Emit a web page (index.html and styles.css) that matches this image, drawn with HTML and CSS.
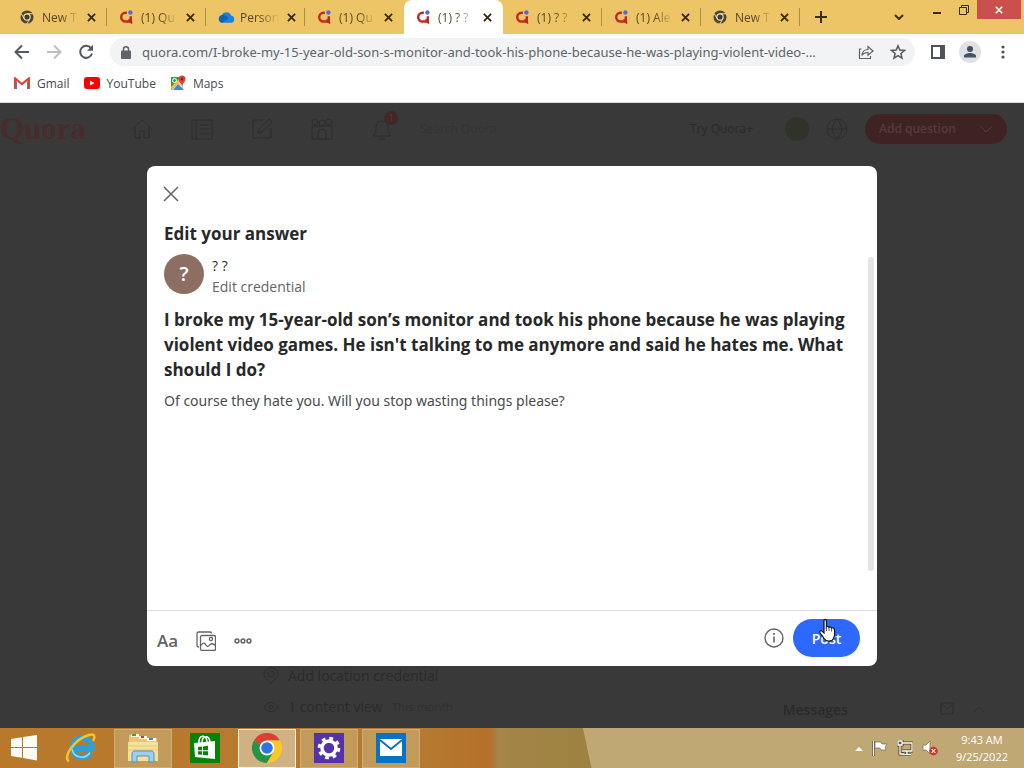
FILE: index.html
```html
<!DOCTYPE html>
<html lang="en">
<head>
  <meta charset="UTF-8">
  <meta name="viewport" content="width=device-width, initial-scale=1.0">
  <title>(1) ? ? - Quora</title>
  <link rel="stylesheet" href="styles.css">
</head>
<body>
  <!-- shared icons -->
  <svg class="sprite" aria-hidden="true">
    <symbol id="i-x" viewBox="0 0 10 10"><path d="M1 1l8 8M9 1L1 9" stroke="currentColor" stroke-width="2" fill="none"/></symbol>
    <symbol id="i-chrome-dark" viewBox="0 0 16 16">
      <circle cx="8" cy="8" r="7.500" fill="#4d4630"/>
      <circle cx="8" cy="8" r="4.200" fill="#f0dfae"/>
      <circle cx="8" cy="8" r="2.900" fill="#3d3a2c"/>
      <path d="M8 4.300h7M4.800 10L1.300 4M11.200 10l-3.500 6" stroke="#f0dfae" stroke-width="1.100"/>
    </symbol>
    <symbol id="i-quora" viewBox="0 0 16 16">
      <path d="M9 3.200H7.500a5 5 0 0 0 0 10H13.500V7" fill="none" stroke="#c22a20" stroke-width="2.800"/>
      <path d="M11 10.500l3.800 5" stroke="#b8281f" stroke-width="2"/>
      <circle cx="13" cy="2.800" r="2.500" fill="#4f6fd8"/>
    </symbol>
    <symbol id="i-cloud" viewBox="0 0 18 12"><path d="M4.500 12a4 4 0 0 1-.6-7.900A5.500 5.500 0 0 1 14 4.500 3.800 3.800 0 0 1 14 12z" fill="#1683d8"/><path d="M4 4.200c3-.8 5 1 7 3.300L4.500 12a4 4 0 0 1-.5-7.800z" fill="#0c64b8"/></symbol>
  </svg>

  <header class="browser">
    <div class="tab-strip">
      <div class="tab"><svg class="favicon"><use href="#i-chrome-dark"/></svg><button class="tab-title">New T</button><button class="tab-close" aria-label="Close tab"><svg><use href="#i-x"/></svg></button></div>
      <div class="tab"><svg class="favicon"><use href="#i-quora"/></svg><button class="tab-title">(1) Qu</button><button class="tab-close" aria-label="Close tab"><svg><use href="#i-x"/></svg></button></div>
      <div class="tab"><svg class="favicon wide"><use href="#i-cloud"/></svg><button class="tab-title">Person</button><button class="tab-close" aria-label="Close tab"><svg><use href="#i-x"/></svg></button></div>
      <div class="tab no-line"><svg class="favicon"><use href="#i-quora"/></svg><button class="tab-title">(1) Qu</button><button class="tab-close" aria-label="Close tab"><svg><use href="#i-x"/></svg></button></div>
      <div class="tab active"><svg class="favicon"><use href="#i-quora"/></svg><button class="tab-title">(1) ? ?</button><button class="tab-close" aria-label="Close tab"><svg><use href="#i-x"/></svg></button></div>
      <div class="tab"><svg class="favicon"><use href="#i-quora"/></svg><button class="tab-title">(1) ? ?</button><button class="tab-close" aria-label="Close tab"><svg><use href="#i-x"/></svg></button></div>
      <div class="tab"><svg class="favicon"><use href="#i-quora"/></svg><button class="tab-title">(1) Ale</button><button class="tab-close" aria-label="Close tab"><svg><use href="#i-x"/></svg></button></div>
      <div class="tab"><svg class="favicon"><use href="#i-chrome-dark"/></svg><button class="tab-title">New T</button><button class="tab-close" aria-label="Close tab"><svg><use href="#i-x"/></svg></button></div>
      <button class="new-tab" aria-label="New tab"><svg width="12" height="12" viewBox="0 0 12 12"><path d="M6 0v12M0 6h12" stroke="#3a3115" stroke-width="2"/></svg></button>
      <div class="window-controls">
        <button class="tab-search" aria-label="Search tabs"><svg width="10" height="6" viewBox="0 0 10 6"><path d="M1 1l4 4 4-4" fill="none" stroke="#3a3115" stroke-width="2"/></svg></button>
        <button class="win-btn" aria-label="Minimize"><svg width="8" height="10" viewBox="0 0 8 10"><path d="M0 8h8" stroke="#33290d" stroke-width="2"/></svg></button>
        <button class="win-btn" aria-label="Restore"><svg width="10" height="10" viewBox="0 0 10 10"><path d="M.5 2.500h7v7h-7zM2.500 2.500v-2h7v7h-2" fill="none" stroke="#33290d"/></svg></button>
        <button class="win-close" aria-label="Close"><svg width="8" height="8"><use href="#i-x"/></svg></button>
      </div>
    </div>

    <div class="toolbar">
      <div class="nav-buttons">
        <button aria-label="Back"><svg width="16" height="16" viewBox="0 0 16 16"><path d="M15 8H2M8 1.500L1.500 8 8 14.500" fill="none" stroke="#555a5e" stroke-width="2"/></svg></button>
        <button aria-label="Forward"><svg width="16" height="16" viewBox="0 0 16 16"><path d="M1 8h13M8 1.500L14.500 8 8 14.500" fill="none" stroke="#bcbec0" stroke-width="2"/></svg></button>
        <button aria-label="Reload"><svg width="16" height="16" viewBox="0 0 16 16"><path d="M13 4.200A6 6 0 1 0 14 9.500" fill="none" stroke="#555a5e" stroke-width="2"/><path d="M15 .8v6H9z" fill="#555a5e"/></svg></button>
      </div>
      <div class="omnibox">
        <svg width="10" height="13" viewBox="0 0 10 13"><rect y="4.500" width="10" height="8.500" rx="1" fill="#5f6368"/><path d="M2.500 5V3.300a2.500 2.500 0 0 1 5 0V5" fill="none" stroke="#5f6368" stroke-width="1.500"/></svg>
        <input class="url" type="text" aria-label="Address" value="quora.com/I-broke-my-15-year-old-son-s-monitor-and-took-his-phone-because-he-was-playing-violent-video-...">
        <button aria-label="Share"><svg width="16" height="16" viewBox="0 0 16 16"><path d="M3.500 5H1.500v9.500h11V12M4 11.500c.3-4 2.500-6 6-6V2.500L15 7l-5 4.200V8.500c-2.800 0-4.600.8-6 3z" fill="none" stroke="#5f6368" stroke-width="1.200"/></svg></button>
        <button aria-label="Bookmark"><svg width="16" height="16" viewBox="0 0 16 16"><path d="M8 1.800l1.800 4.300 4.700.4-3.600 3 1.100 4.600L8 11.700l-4 2.400 1.100-4.600-3.600-3 4.700-.4z" fill="none" stroke="#555a5e" stroke-width="1.500"/></svg></button>
      </div>
      <div class="toolbar-end">
        <button aria-label="Side panel"><svg width="14" height="14" viewBox="0 0 14 14"><path d="M1 1h12v12H1z" fill="none" stroke="#50545a" stroke-width="2"/><path d="M9 1h5v12H9z" fill="#50545a"/></svg></button>
        <button aria-label="Profile"><svg width="22" height="22" viewBox="0 0 22 22"><circle cx="11" cy="11" r="11" fill="#dfe1e5"/><circle cx="11" cy="8" r="3" fill="#46505f"/><path d="M5 16.500v-1.500c0-2 4-3 6-3s6 1 6 3v1.500z" fill="#46505f"/></svg></button>
        <button class="menu" aria-label="Menu"><svg width="4" height="14" viewBox="0 0 4 14"><g fill="#50545a"><circle cx="2" cy="2" r="1.600"/><circle cx="2" cy="7" r="1.600"/><circle cx="2" cy="12" r="1.600"/></g></svg></button>
      </div>
    </div>

    <nav class="bookmarks">
      <a href="#"><svg width="16" height="12" viewBox="0 0 16 12"><path d="M0 1.500V12h3V5z" fill="#4c7fd8"/><path d="M16 1.500V12h-3V5z" fill="#3f9c57"/><path d="M1.200 11.500V1.500L8 7l6.800-5.500v10" fill="none" stroke="#dc4437" stroke-width="2.200"/></svg>Gmail</a>
      <a href="#"><svg width="16" height="12" viewBox="0 0 16 12"><rect width="16" height="12" rx="3" fill="#f00"/><path d="M6 3.500v5L10.500 6z" fill="#fff"/></svg>YouTube</a>
      <a href="#"><svg width="16" height="16" viewBox="0 0 16 16"><path d="M1 2h12v13H1z" fill="#3d9d55"/><path d="M1 15L12 4l1 11z" fill="#dcdfe0"/><path d="M8 9l6 6H3z" fill="#4a82df"/><path d="M1 12l8-8 2 2L2 15z" fill="#f1c232"/><circle cx="4.500" cy="5.500" r="2" fill="none" stroke="#fff"/><path d="M12 11c-.5-3-3.500-4-3.500-7a3.500 3.500 0 0 1 7 0C15.500 7 12.500 8 12 11z" fill="#dc4032"/><circle cx="12" cy="4" r="1.200" fill="#7d1d17"/></svg>Maps</a>
    </nav>
  </header>

  <main class="viewport">
    <!-- page behind the dialog -->
    <div class="page">
      <div class="site-header">
        <a class="logo" href="#">Quora</a>
        <nav class="site-nav">
          <a href="#" aria-label="Home"><svg width="24" height="24" viewBox="0 0 24 24"><path d="M2 12L12 3l10 9M5 10v11h5v-7h4v7h5V10"/></svg></a>
          <a href="#" aria-label="Following"><svg width="24" height="24" viewBox="0 0 24 24"><path d="M2 3h20v19H2zM6 3v19M10 8h9M10 12h9M10 17h9"/></svg></a>
          <a href="#" aria-label="Answer"><svg width="24" height="24" viewBox="0 0 24 24"><path d="M13 3H3v18h18V11M8 16l1-4L19 2l3 3-10 10z"/></svg></a>
          <a href="#" aria-label="Spaces"><svg width="24" height="24" viewBox="0 0 24 24"><path d="M2 9h20v13H2zM8 22v-6a4 4 0 0 1 8 0v6"/><circle cx="5" cy="5" r="3"/><circle cx="12" cy="6" r="3"/><circle cx="19" cy="5" r="3"/></svg></a>
          <a class="bell" href="#" aria-label="Notifications"><svg width="24" height="24" viewBox="0 0 24 24"><path d="M3 19c2-2 3-4 3-9a6 6 0 0 1 12 0c0 5 1 7 3 9zM9 22h6"/></svg><span class="badge">1</span></a>
        </nav>
        <input class="site-search" type="text" aria-label="Search" placeholder="Search Quora">
        <a class="try" href="#">Try Quora+</a>
        <span class="mini-avatar"></span>
        <svg class="globe" width="24" height="24" viewBox="0 0 24 24"><circle cx="12" cy="12" r="10"/><path d="M2 12h20M12 2c-6 6-6 14 0 20M12 2c6 6 6 14 0 20"/></svg>
        <button class="add-question">Add question <svg width="14" height="8" viewBox="0 0 14 8"><path d="M1 1l6 6 6-6"/></svg></button>
      </div>
      <div class="page-bottom">
        <ul class="credentials">
          <li><svg width="16" height="18" viewBox="0 0 16 18"><path d="M8 17C4 12 1 10 1 7a7 6 0 0 1 14 0c0 3-3 5-7 10z"/><circle cx="8" cy="7" r="3"/></svg>Add location credential</li>
          <li><svg width="16" height="18" viewBox="0 0 16 18"><path d="M1 9c4-6 10-6 14 0-4 6-10 6-14 0z"/><circle cx="8" cy="9" r="2"/></svg>1 content view <small>This month</small></li>
        </ul>
        <div class="messages">Messages <svg width="46" height="16" viewBox="0 0 46 16"><path d="M1 2h12v11H1zM1 2l6 6 8-7M34 11l5-5 5 5"/></svg></div>
      </div>
    </div>

    <div class="overlay">
      <section class="modal" role="dialog" aria-labelledby="dialog-title">
        <button class="modal-close" aria-label="Close"><svg width="16" height="16" viewBox="0 0 16 16"><path d="M1 1l14 14M15 1L1 15" stroke="#636466" stroke-width="1.500"/></svg></button>
        <h1 id="dialog-title">Edit your answer</h1>
        <div class="modal-body">
          <div class="modal-content">
            <div class="author">
              <span class="avatar">?</span>
              <div>
                <p class="author-name">? ?</p>
                <a class="credential" href="#">Edit credential</a>
              </div>
            </div>
            <h2>I broke my 15-year-old son’s monitor and took his phone because he was playing violent video games. He isn't talking to me anymore and said he hates me. What should I do?</h2>
            <textarea class="answer" aria-label="Your answer">Of course they hate you. Will you stop wasting things please?</textarea>
          </div>
          <div class="scroll-thumb"></div>
        </div>
        <footer class="modal-footer">
          <div class="tools">
            <button class="format">Aa</button>
            <button aria-label="Add image"><svg width="20" height="20" viewBox="0 0 20 20"><g fill="none" stroke="#636466" stroke-width="1.300"><path d="M3 16c-1.200 0-2-.5-2-1.500v-12A1.500 1.500 0 0 1 2.500 1H14c1 0 1.700.6 1.700 1.500"/><rect x="4.500" y="4.500" width="15" height="15" rx="1.500"/><circle cx="15" cy="8" r="1.600"/><path d="M5 14.500c2-3 3.500-3 5-.5s2.500 1.500 4-.3 3-1.200 5.500.8"/></g></svg></button>
            <button aria-label="More"><svg width="18" height="6" viewBox="0 0 18 6"><g fill="none" stroke="#636466" stroke-width="1.500"><circle cx="3" cy="3" r="1.900"/><circle cx="9" cy="3" r="1.900"/><circle cx="15" cy="3" r="1.900"/></g></svg></button>
          </div>
          <button class="info" aria-label="Info"><svg width="20" height="20" viewBox="0 0 20 20"><circle cx="10" cy="10" r="9" fill="none" stroke="#636466" stroke-width="1.400"/><path d="M10 8.500v6M10 5v2" stroke="#636466" stroke-width="1.600"/></svg></button>
          <div class="post-wrap">
            <button class="post">Post</button>
            <svg class="cursor" width="18" height="24" viewBox="0 0 18 24"><path d="M5 1.500c0-1.300 2.400-1.300 2.400 0V8c.6-1 2.400-.8 2.600.4.700-.8 2.300-.5 2.500.7 1-.7 2.800-.2 2.800 1.300.8 3.800.5 6.600-.9 9.200-.9 3-7 3.400-9 .4C3.800 17.500 2.200 15.500.9 13.500c-.7-1.400.9-2.300 2-1.400L5 14z" fill="#fff" stroke="#111" stroke-width="1.200"/><path d="M7.500 8v4M10 8.500V12M12.500 9v3.500" stroke="#333" stroke-width=".8"/></svg>
          </div>
        </footer>
      </section>
    </div>
  </main>

  <footer class="taskbar">
    <button class="task" aria-label="Start"><svg width="28" height="28" viewBox="0 0 28 28"><path d="M1 5l11-1.800V13H1zM13 3l14-2v12H13zM1 14h11v9.800L1 22zM13 14h14v12.500L13 24z" fill="#fffdf3"/></svg></button>
    <button class="task" aria-label="Internet Explorer"><svg width="32" height="32" viewBox="0 0 32 32"><path d="M25.500 21A9.800 9.800 0 1 1 27 16.800H9" fill="none" stroke="#2f9fd8" stroke-width="5.600"/><path d="M25 20.500A9.800 9.800 0 0 1 7 17" fill="none" stroke="#9ddcf3" stroke-width="1.500"/><path d="M4 29.500C-3 25 10 7 24 3c7-2 6 3 4 6" fill="none" stroke="#f3c32c" stroke-width="2.500"/></svg></button>
    <button class="task open" aria-label="File Explorer"><svg width="32" height="32" viewBox="0 0 32 32"><path d="M2 3h9l2 3h17v22H2z" fill="#e8c970"/><path d="M4 2h8v3H4zM12 4h8v3h-8zM20 6h9v3h-9z" fill="#fff8e0"/><path d="M5 2h4v2H5z" fill="#4b9a3d"/><path d="M14 4h3v2h-3z" fill="#c33c2b"/><path d="M22 6h4v2h-4z" fill="#438ac4"/><path d="M1 10h30v19H1z" fill="#f6e196"/><path d="M1 14h30M1 18h30" stroke="#e7cb74"/><path d="M5 30v-8c0-2 1-3 3-3h16c2 0 3 1 3 3v8h-5v-6H10v6z" fill="#9fcff0" stroke="#4a92c5"/></svg></button>
    <button class="task" aria-label="Store"><svg width="30" height="30" viewBox="0 0 30 30"><path d="M0 0h30v30H0z" fill="#078407"/><path d="M4 10l21-2v18L5 24z" fill="#fff"/><path d="M9 11c-1-10 8-10 8-2M12 10c0-8 7-8 8-1" fill="none" stroke="#fff" stroke-width="1.500"/><path d="M8 14l4-.5v3.700H8zM13 13.400l5-.6v4.400h-5zM8 18.200h4v3.600L8 21.500zM13 18.200h5v4.300l-5-.6z" fill="#078407"/></svg></button>
    <button class="task open current" aria-label="Chrome"><svg width="30" height="30" viewBox="0 0 30 30"><path d="M15 15L2 7.500A15 15 0 0 1 28 7.500H15z" fill="#dd4033"/><path d="M15 15L2 7.500A15 15 0 0 0 15 30l6.500-11z" fill="#259447"/><path d="M15 7.500h13A15 15 0 0 1 15 30l6.500-11z" fill="#fbc926"/><circle cx="15" cy="15" r="7.500" fill="#fff"/><circle cx="15" cy="15" r="5.800" fill="#2f74e4"/></svg></button>
    <button class="task open" aria-label="Settings"><svg width="30" height="30" viewBox="0 0 30 30"><path d="M0 0h30v30H0z" fill="#5632a8"/><circle cx="15" cy="15" r="7" fill="none" stroke="#fff" stroke-width="3.500"/><circle cx="15" cy="15" r="9.800" fill="none" stroke="#fff" stroke-width="3" stroke-dasharray="3.800 3.900"/></svg></button>
    <button class="task open" aria-label="Mail"><svg width="30" height="30" viewBox="0 0 30 30"><path d="M0 0h30v30H0z" fill="#0872c4"/><path d="M4 6h22v17H4z" fill="#fff"/><path d="M4 7l11 9L26 7" fill="none" stroke="#0872c4" stroke-width="2"/></svg></button>
    <div class="tray">
      <svg width="8" height="5" viewBox="0 0 8 5"><path d="M0 5l4-4 4 4z" fill="#fff"/></svg>
      <svg width="16" height="16" viewBox="0 0 16 16"><path d="M1.500 1v15" stroke="#4c4029" stroke-width="3"/><path d="M1.500 1v15" stroke="#fff" stroke-width="1.500"/><path d="M3 2h6l1 2h5l-2 3 1 3H9L8 8H3z" fill="#fff" stroke="#6a5939" stroke-width=".6"/></svg>
      <svg width="16" height="16" viewBox="0 0 16 16"><path d="M5 3h10v8H5M6 14.500h8M10 11v3M1 1h4v4H1zM3 5v9h4" fill="none" stroke="#4c4029" stroke-width="3"/><path d="M5 3h10v8H5M6 14.500h8M10 11v3M1 1h4v4H1zM3 5v9h4" fill="none" stroke="#fff" stroke-width="1.300"/></svg>
      <svg width="16" height="16" viewBox="0 0 16 16"><path d="M1 5h3l4-4v13l-4-4H1z" fill="#fff" stroke="#6a5939" stroke-width=".6"/><circle cx="11.500" cy="11" r="4.300" fill="#d62e2e"/><path d="M9.700 9.200l3.600 3.600M13.300 9.200l-3.600 3.600" stroke="#fff" stroke-width="1.200"/></svg>
      <time class="clock">9:43 AM<br>9/25/2022</time>
    </div>
  </footer>
</body>
</html>
```
FILE: styles.css
```css
* {
  box-sizing: border-box;
}
body {
  margin: 0;
  min-height: 100vh;
  display: flex;
  flex-direction: column;
  font-family: "Open Sans", "Noto Sans", sans-serif;
  font-size: 14px;
  color: #282829;
  overflow-x: hidden;
}
button, input, textarea {
  font: inherit;
  color: inherit;
  border: none;
  background: none;
  padding: 0;
  outline: none;
}
button {
  cursor: pointer;
}
a {
  color: inherit;
  text-decoration: none;
}
h1, h2, p, ul {
  margin: 0;
  padding: 0;
}
svg {
  display: block;
  flex: none;
}
.sprite {
  position: absolute;
  width: 0;
  height: 0;
}

/* browser */
.tab-strip {
  display: flex;
  height: 34px;
  padding-left: 8px;
  background-color: #eec566;
  font-size: 12px;
}
.tab {
  flex: 0 1 99px;
  min-width: 0;
  display: flex;
  align-items: center;
  gap: 8px;
  padding: 0 11px 0 12px;
  background: linear-gradient(#a98d4c, #a98d4c) right center / 1px 18px no-repeat;
}
.tab.no-line, .tab.active {
  background: none;
}
.tab.active {
  background-color: #fff;
  border-radius: 8px 8px 0 0;
}
.favicon {
  width: 14px;
  height: 14px;
}
.favicon.wide {
  width: 17px;
  margin-right: -3px;
}
.tab-title {
  flex: 1;
  white-space: nowrap;
  text-align: left;
  color: #54482a;
  mask-image: linear-gradient(to right, #000 50%, transparent);
}
.tab-close svg {
  width: 9px;
  height: 9px;
  color: #33290d;
}
.new-tab {
  width: 42px;
  display: flex;
  align-items: center;
  justify-content: center;
}
.window-controls {
  display: flex;
  align-items: flex-start;
  margin-left: auto;
  padding-right: 3px;
}
.tab-search {
  width: 32px;
  height: 34px;
  margin-right: 8px;
}
.tab-search svg {
  margin: 0 auto;
}
.win-btn, .win-close {
  width: 27px;
  height: 19px;
  display: flex;
  align-items: center;
  justify-content: center;
}
.win-close {
  width: 44px;
  background-color: #c9504c;
  color: #fff;
}
.toolbar {
  display: flex;
  align-items: center;
  gap: 16px;
  height: 36px;
  padding: 0 19px 0 14px;
  background-color: #fff;
}
.nav-buttons {
  display: flex;
  gap: 16px;
}
.omnibox {
  flex: 1;
  min-width: 0;
  height: 28px;
  display: flex;
  align-items: center;
  gap: 16px;
  padding: 0 9px 0 11px;
  border-radius: 14px;
  background-color: #f1f3f4;
}
.url {
  flex: 1;
  min-width: 0;
  margin-left: -5px;
  font-family: "Noto Sans", sans-serif;
  font-size: 13px;
  color: #5f6368;
}
.toolbar-end {
  display: flex;
  align-items: center;
  gap: 14px;
}
.menu {
  margin-left: 6px;
}
.bookmarks {
  display: flex;
  align-items: center;
  gap: 14px;
  height: 33px;
  padding: 0 14px 6px;
  border-bottom: 1px solid #dcdcdc;
  background-color: #fff;
  font-size: 12px;
  color: #45494d;
}
.bookmarks a {
  display: flex;
  align-items: center;
  gap: 7px;
}

/* dimmed page */
.viewport {
  position: relative;
  flex: 1;
  display: flex;
  flex-direction: column;
}
.page {
  flex: 1;
  display: flex;
  flex-direction: column;
  justify-content: space-between;
  background-color: #393939;
  color: #2a2a2a;
}
.page svg {
  fill: none;
  stroke: #2d2d2d;
}
.site-header {
  display: flex;
  align-items: center;
  height: 51px;
  padding-right: 17px;
  font-size: 12px;
}
.logo {
  width: 130px;
  font: bold 31px "Liberation Serif", serif;
  color: #482b2b;
}
.site-nav {
  display: flex;
  gap: 36px;
}
.bell {
  position: relative;
}
.badge {
  position: absolute;
  top: -6px;
  right: -4px;
  width: 14px;
  height: 14px;
  border-radius: 50%;
  background-color: #432626;
  color: #573f3f;
  font-size: 9px;
  line-height: 14px;
  text-align: center;
}
.site-search {
  flex: 1;
  min-width: 0;
  margin-left: 26px;
}
.site-search::placeholder {
  color: #333;
}
.try {
  margin-right: 32px;
}
.mini-avatar {
  width: 24px;
  height: 24px;
  border-radius: 50%;
  background-color: #2f3328;
}
.globe {
  margin: 0 16px;
}
.add-question {
  display: flex;
  align-items: center;
  justify-content: space-between;
  width: 142px;
  height: 30px;
  padding: 0 14px;
  border-radius: 15px;
  background-color: #3f2323;
  color: #543c3c;
  font-weight: 600;
}
.add-question svg {
  stroke: #543c3c;
}
.page-bottom {
  display: flex;
  align-items: flex-end;
  justify-content: space-between;
  padding: 0 38px 6px 263px;
}
.credentials {
  list-style: none;
}
.credentials li {
  display: flex;
  align-items: center;
  gap: 9px;
  height: 31px;
}
.credentials small {
  color: #303030;
}
.messages {
  display: flex;
  align-items: center;
  gap: 92px;
  height: 26px;
  font-weight: 600;
}

/* dialog */
.overlay {
  position: absolute;
  inset: 0;
  display: flex;
  align-items: center;
  justify-content: center;
}
.modal {
  width: 730px;
  max-width: 100%;
  min-height: 500px;
  display: flex;
  flex-direction: column;
  border-radius: 8px;
  background-color: #fff;
}
.modal-close {
  align-self: flex-start;
  margin: 20px 16px 18px;
}
.modal h1 {
  padding: 0 17px;
  font-size: 17px;
  line-height: 28px;
}
.modal-body {
  flex: 1;
  display: flex;
  padding: 6px 3px 0 17px;
}
.modal-content {
  flex: 1;
  display: flex;
  flex-direction: column;
}
.author {
  display: flex;
  gap: 8px;
}
.author div {
  padding-top: 1px;
  line-height: 21px;
}
.avatar {
  width: 40px;
  height: 40px;
  border-radius: 50%;
  background-color: #8d6e63;
  color: #fff;
  font-size: 20px;
  font-weight: 600;
  line-height: 40px;
  text-align: center;
}
.credential {
  color: #636466;
}
.modal h2 {
  margin-top: 10px;
  padding-right: 8px;
  font-size: 17px;
  line-height: 25px;
}
.answer {
  flex: 1;
  width: 100%;
  margin-top: 8px;
  resize: none;
  font-family: "Noto Sans", sans-serif;
  line-height: 21px;
  color: #4a4b4d;
}
.scroll-thumb {
  width: 6px;
  margin: 3px 0 39px;
  border-radius: 3px;
  background-color: #e4e4e4;
}
.modal-footer {
  display: flex;
  align-items: center;
  justify-content: space-between;
  height: 56px;
  padding: 0 17px 0 10px;
  border-top: 1px solid #dee0e1;
}
.tools {
  display: flex;
  align-items: center;
  gap: 18px;
  padding-top: 5px;
}
.format {
  font-size: 17px;
  font-weight: 600;
  color: #636466;
}
.info {
  margin-left: auto;
}
.post-wrap {
  position: relative;
  margin-left: 9px;
}
.post {
  width: 67px;
  height: 38px;
  border-radius: 19px;
  background-color: #2e69ff;
  color: #fff;
  font-weight: 600;
}
.cursor {
  position: absolute;
  top: 0;
  left: 26px;
}

/* taskbar */
.taskbar {
  display: flex;
  align-items: center;
  gap: 4px;
  height: 40px;
  background: linear-gradient(78deg, transparent 578px, #bfa873 579px),
    linear-gradient(to right, #b8792b 0, #b67a31 420px, #b57029 490px, #a58549 498px, #9c8240 585px);
}
.task {
  width: 58px;
  height: 39px;
  display: flex;
  align-items: center;
  justify-content: center;
}
.task:first-child {
  width: 48px;
}
.task.open {
  border: 1px solid #cfae72;
  background-color: #c29a5a;
}
.task.current {
  border-color: #fff6dc;
  background-color: #cfb184;
}
.tray {
  display: flex;
  align-items: center;
  gap: 9px;
  margin-left: auto;
  padding-right: 16px;
}
.clock {
  margin-left: 9px;
  color: #fff;
  font-size: 11px;
  line-height: 17px;
  text-align: center;
}
```
